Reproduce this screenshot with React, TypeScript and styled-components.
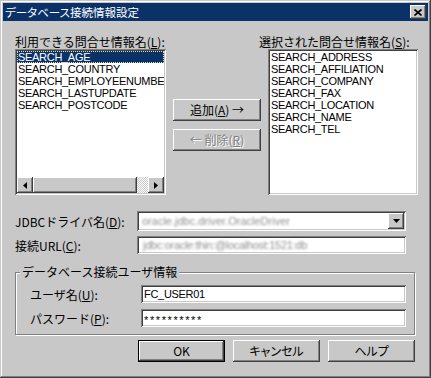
import React from "react";
import styled, { createGlobalStyle } from "styled-components";

const FACE = "#c8c8c8";
const NAVY = "#0a3168";
const JP = `"Noto Sans CJK JP", "Liberation Sans", sans-serif`;
const SANS = `"Liberation Sans", Arial, sans-serif`;

const raised = `
  box-shadow: inset -1px -1px #404040, inset 1px 1px #ffffff,
    inset -2px -2px #808080, inset 2px 2px ${FACE};
`;
const sunken = `
  box-shadow: inset 1px 1px #808080, inset -1px -1px #ffffff,
    inset 2px 2px #404040, inset -2px -2px ${FACE};
`;

const GlobalStyle = createGlobalStyle`
  html, body { margin: 0; padding: 0; background: ${FACE}; }
  * { box-sizing: border-box; }
`;

const Window = styled.div`
  width: 431px;
  height: 378px;
  padding: 3px;
  background: ${FACE};
  box-shadow: inset -1px -1px #404040, inset 1px 1px ${FACE},
    inset -2px -2px #808080, inset 2px 2px #ffffff;
  display: flex;
  flex-direction: column;
`;

const TitleBar = styled.div`
  height: 18px;
  flex: none;
  background: ${NAVY};
  color: #fff;
  display: flex;
  align-items: center;
  justify-content: space-between;
  padding-left: 2px;
  font: 11.5px/18px ${JP};
  font-feature-settings: "palt";
`;

const CloseButton = styled.div`
  width: 16px;
  height: 14px;
  margin-right: 2px;
  background: ${FACE};
  ${raised}
  display: flex;
  align-items: center;
  justify-content: center;
`;

const Content = styled.div`
  padding: 13px 10px 0 12px;
  display: flex;
  flex-direction: column;
`;

const ListsGrid = styled.div`
  display: grid;
  grid-template-columns: 151px 88px 150px;
  grid-template-rows: 15px 146px;
  column-gap: 7px;
`;

const Label = styled.span<{ $shift?: number }>`
  font: 12px/15px ${JP};
  color: #000;
  white-space: nowrap;
  margin-left: ${p => p.$shift || 0}px;
`;

const ListBox = styled.div<{ $col: number }>`
  grid-row: 2;
  grid-column: ${p => p.$col};
  background: #fff;
  padding: 2px;
  ${sunken}
  display: flex;
  flex-direction: column;
  overflow: hidden;
`;

const Items = styled.div`
  flex: 1;
  overflow: hidden;
`;

const ListItem = styled.div<{ $selected?: boolean }>`
  height: 12px;
  padding-left: 1px;
  font: 11px/12px ${SANS};
  letter-spacing: -0.3px;
  white-space: nowrap;
  color: ${p => (p.$selected ? "#fff" : "#000")};
  background: ${p => (p.$selected ? NAVY : "transparent")};
  outline: ${p => (p.$selected ? "1px dotted #e8dca0" : "none")};
  outline-offset: -1px;
`;

const HScroll = styled.div`
  height: 16px;
  flex: none;
  display: flex;
`;

const ArrowButton = styled.div`
  width: 16px;
  height: 16px;
  flex: none;
  background: ${FACE};
  ${raised}
  display: flex;
  align-items: center;
  justify-content: center;
`;

const Thumb = styled.div`
  width: 104px;
  height: 16px;
  flex: none;
  background: ${FACE};
  ${raised}
`;

const Track = styled.div`
  flex: 1;
  background: repeating-conic-gradient(#ffffff 0 25%, ${FACE} 0 50%) 0 0 / 2px 2px;
`;

const MoveColumn = styled.div`
  grid-row: 2;
  grid-column: 2;
  display: flex;
  flex-direction: column;
  gap: 8px;
  padding-top: 50px;
`;

const PushButton = styled.button<{ $w: number; $default?: boolean }>`
  width: ${p => p.$w}px;
  height: 22px;
  padding: 0;
  background: ${FACE};
  border: ${p => (p.$default ? "1px solid #000" : "none")};
  ${raised}
  font: 12px/20px ${JP};
  color: #000;
  white-space: nowrap;
  &:disabled {
    color: #808080;
    text-shadow: 1px 1px #ffffff;
  }
`;

const Kana = styled.span`
  font-feature-settings: "palt";
`;

const FieldRow = styled.div<{ $label: number; $h: number; $top?: number }>`
  display: grid;
  grid-template-columns: ${p => p.$label}px 1fr;
  align-items: center;
  height: ${p => p.$h}px;
  margin-top: ${p => p.$top || 0}px;
`;

const Combo = styled.div`
  width: 269px;
  height: 20px;
  padding: 2px;
  background: #fff;
  ${sunken}
  display: flex;
  align-items: center;
`;

const BlurText = styled.span`
  flex: 1;
  padding-left: 3px;
  font: 11px/16px ${SANS};
  color: #909090;
  filter: blur(0.8px);
  white-space: nowrap;
  overflow: hidden;
`;

const TextField = styled.div<{ $w: number }>`
  width: ${p => p.$w}px;
  height: 18px;
  padding: 0 3px;
  background: #fff;
  ${sunken}
  display: flex;
  align-items: center;
  font: 11px/14px ${SANS};
  letter-spacing: -0.3px;
  color: #000;
  white-space: nowrap;
`;

const Masked = styled.span`
  font: 11px/14px ${SANS};
  letter-spacing: 1.6px;
  padding-top: 3px;
`;

const GroupBox = styled.div`
  width: 400px;
  margin-top: 18px;
  border: 1px solid #808080;
  box-shadow: inset 1px 1px #ffffff, 1px 1px #ffffff;
  padding: 0 8px 7px 14px;
  display: flex;
  flex-direction: column;
`;

const Legend = styled.span`
  align-self: flex-start;
  margin: -8px 0 0 -10px;
  padding: 0 2px;
  background: ${FACE};
  font: 12px/14px ${JP};
  color: #000;
`;

const GroupRows = styled.div`
  margin-top: 6px;
  display: flex;
  flex-direction: column;
  gap: 6px;
`;

const ButtonBar = styled.div`
  width: 400px;
  margin-top: 5px;
  display: flex;
  justify-content: flex-end;
  gap: 8px;
`;

const LeftArrow = () => (
  <svg width="4" height="7" viewBox="0 0 4 7">
    <polygon points="4,0 0,3.5 4,7" fill="#000" />
  </svg>
);

const RightArrow = () => (
  <svg width="4" height="7" viewBox="0 0 4 7">
    <polygon points="0,0 4,3.5 0,7" fill="#000" />
  </svg>
);

const DownArrow = () => (
  <svg width="7" height="4" viewBox="0 0 7 4">
    <polygon points="0,0 7,0 3.5,4" fill="#000" />
  </svg>
);

const CloseGlyph = () => (
  <svg width="8" height="7" viewBox="0 0 8 7">
    <path d="M0.5 0.5 L7.5 6.5 M7.5 0.5 L0.5 6.5" stroke="#000" strokeWidth="1.7" />
  </svg>
);

const available = [
  "SEARCH_AGE",
  "SEARCH_COUNTRY",
  "SEARCH_EMPLOYEENUMBER",
  "SEARCH_LASTUPDATE",
  "SEARCH_POSTCODE",
];

const selected = [
  "SEARCH_ADDRESS",
  "SEARCH_AFFILIATION",
  "SEARCH_COMPANY",
  "SEARCH_FAX",
  "SEARCH_LOCATION",
  "SEARCH_NAME",
  "SEARCH_TEL",
];

export default function App() {
  return (
    <>
      <GlobalStyle />
      <Window>
        <TitleBar>
          <span>データベース接続情報設定</span>
          <CloseButton>
            <CloseGlyph />
          </CloseButton>
        </TitleBar>
        <Content>
          <ListsGrid>
            <Label>
              利用できる問合せ情報名(<u>L</u>):
            </Label>
            <span />
            <Label $shift={-9}>
              選択された問合せ情報名(<u>S</u>):
            </Label>
            <ListBox $col={1}>
              <Items>
                {available.map((name, i) => (
                  <ListItem key={name} $selected={i === 0}>
                    {name}
                  </ListItem>
                ))}
              </Items>
              <HScroll>
                <ArrowButton>
                  <LeftArrow />
                </ArrowButton>
                <Thumb />
                <Track />
                <ArrowButton>
                  <RightArrow />
                </ArrowButton>
              </HScroll>
            </ListBox>
            <MoveColumn>
              <PushButton $w={88}>
                追加(<u>A</u>) →
              </PushButton>
              <PushButton $w={88} disabled>
                ← 削除(<u>R</u>)
              </PushButton>
            </MoveColumn>
            <ListBox $col={3}>
              <Items>
                {selected.map(name => (
                  <ListItem key={name}>{name}</ListItem>
                ))}
              </Items>
            </ListBox>
          </ListsGrid>

          <FieldRow $label={122} $h={20} $top={16}>
            <Label>
              JDBCドライバ名(<u>D</u>):
            </Label>
            <Combo>
              <BlurText>oracle.jdbc.driver.OracleDriver</BlurText>
              <ArrowButton>
                <DownArrow />
              </ArrowButton>
            </Combo>
          </FieldRow>
          <FieldRow $label={122} $h={18} $top={5}>
            <Label>
              接続URL(<u>C</u>):
            </Label>
            <TextField $w={269}>
              <BlurText>jdbc:oracle:thin:@localhost:1521:db</BlurText>
            </TextField>
          </FieldRow>

          <GroupBox>
            <Legend>データベース接続ユーザ情報</Legend>
            <GroupRows>
              <FieldRow $label={111} $h={18}>
                <Label>
                  ユーザ名(<u>U</u>):
                </Label>
                <TextField $w={265}>FC_USER01</TextField>
              </FieldRow>
              <FieldRow $label={111} $h={18}>
                <Label>
                  パスワード(<u>P</u>):
                </Label>
                <TextField $w={265}>
                  <Masked>**********</Masked>
                </TextField>
              </FieldRow>
            </GroupRows>
          </GroupBox>

          <ButtonBar>
            <PushButton $w={87} $default>
              OK
            </PushButton>
            <PushButton $w={87}>
              <Kana>キャンセル</Kana>
            </PushButton>
            <PushButton $w={87}>
              <Kana>ヘルプ</Kana>
            </PushButton>
          </ButtonBar>
        </Content>
      </Window>
    </>
  );
}
